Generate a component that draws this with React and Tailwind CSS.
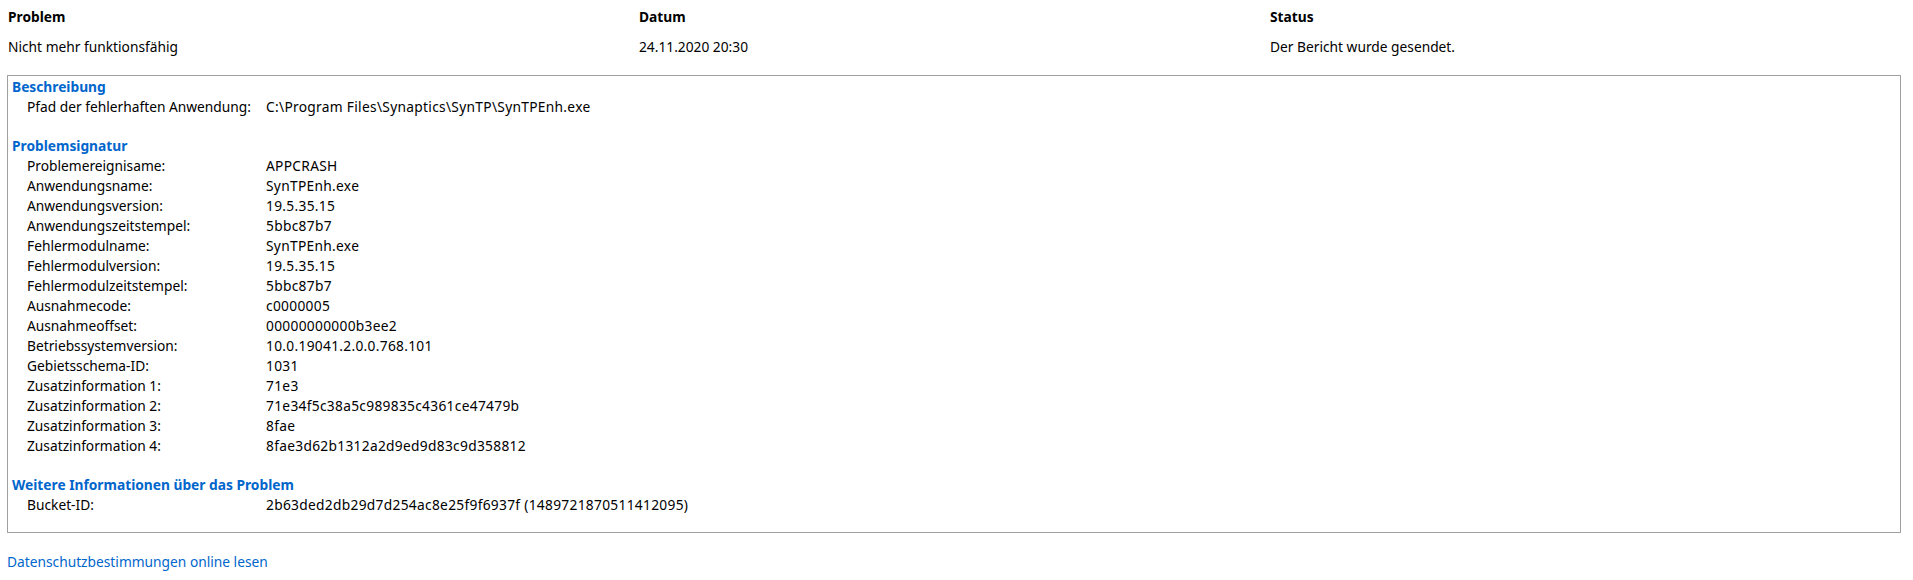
const beschreibung = [
  ["Pfad der fehlerhaften Anwendung:", "C:\\Program Files\\Synaptics\\SynTP\\SynTPEnh.exe"],
];

const signatur = [
  ["Problemereignisame:", "APPCRASH"],
  ["Anwendungsname:", "SynTPEnh.exe"],
  ["Anwendungsversion:", "19.5.35.15"],
  ["Anwendungszeitstempel:", "5bbc87b7"],
  ["Fehlermodulname:", "SynTPEnh.exe"],
  ["Fehlermodulversion:", "19.5.35.15"],
  ["Fehlermodulzeitstempel:", "5bbc87b7"],
  ["Ausnahmecode:", "c0000005"],
  ["Ausnahmeoffset:", "00000000000b3ee2"],
  ["Betriebssystemversion:", "10.0.19041.2.0.0.768.101"],
  ["Gebietsschema-ID:", "1031"],
  ["Zusatzinformation 1:", "71e3"],
  ["Zusatzinformation 2:", "71e34f5c38a5c989835c4361ce47479b"],
  ["Zusatzinformation 3:", "8fae"],
  ["Zusatzinformation 4:", "8fae3d62b1312a2d9ed9d83c9d358812"],
];

const weitere = [
  ["Bucket-ID:", "2b63ded2db29d7d254ac8e25f9f6937f (1489721870511412095)"],
];

function Section({ title, rows, className = "" }) {
  return (
    <div className={className}>
      <div className="font-bold text-[#0066cc]">{title}</div>
      {rows.map(([label, value]) => (
        <div key={label} className="flex">
          <div className="w-[254px] shrink-0 pl-[15px]">{label}</div>
          <div className="whitespace-pre tracking-[0.3px]">{value}</div>
        </div>
      ))}
    </div>
  );
}

export default function App() {
  return (
    <div
      className="min-h-screen bg-white pl-[7px] pr-[12px] pt-[7px] text-[13.75px] leading-[20px] text-black"
      style={{ fontFamily: '"Noto Sans", "Open Sans", sans-serif' }}
    >
      {/* Kopfzeile */}
      <div className="grid grid-cols-3 pl-[1px] font-bold">
        <div>Problem</div>
        <div>Datum</div>
        <div>Status</div>
      </div>
      <div className="mt-[10px] grid grid-cols-3 pl-[1px]">
        <div>Nicht mehr funktionsfähig</div>
        <div>24.11.2020 20:30</div>
        <div>Der Bericht wurde gesendet.</div>
      </div>

      {/* Details */}
      <div className="mt-[18px] border border-[#a0a0a0] pb-[17px] pl-[4px] pt-[1px]">
        <Section title="Beschreibung" rows={beschreibung} />
        <Section title="Problemsignatur" rows={signatur} className="mt-[19px]" />
        <Section title="Weitere Informationen über das Problem" rows={weitere} className="mt-[19px]" />
      </div>

      <div className="mt-[19px]">
        <a href="#" className="text-[#0066cc]">
          Datenschutzbestimmungen online lesen
        </a>
      </div>
    </div>
  );
}
